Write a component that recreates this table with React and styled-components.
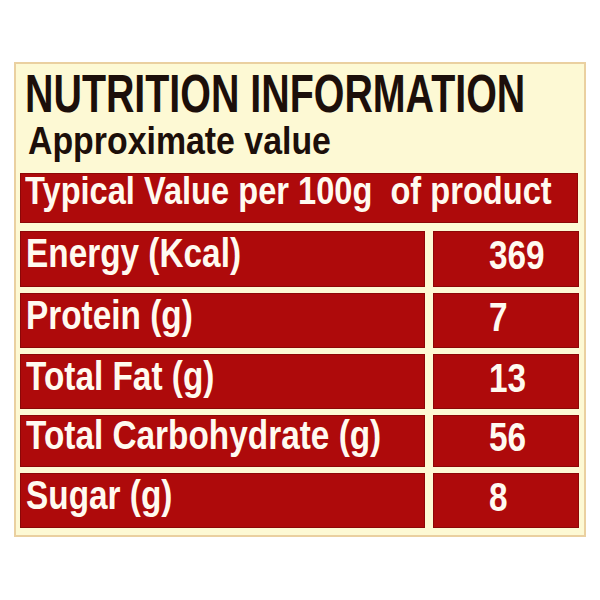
import React, { useLayoutEffect, useRef, useState } from 'react'
import styled, { createGlobalStyle } from 'styled-components'

const GlobalStyle = createGlobalStyle`
  html, body {
    margin: 0;
    padding: 0;
    background: #ffffff;
  }
`

const Page = styled.div`
  width: 600px;
  height: 600px;
  padding: 62px 14px 0 14px;
  box-sizing: border-box;
`

const Panel = styled.section`
  width: 572px;
  box-sizing: border-box;
  background: #fdf9d4;
  border: 2px solid #ead0a0;
  padding: 0 6px 7px 4px;
  display: flex;
  flex-direction: column;
  font-family: "Liberation Sans", Arial, sans-serif;
  font-weight: 700;
`

const Title = styled.h1`
  margin: 0;
  height: 60px;
  padding-left: 5px;
  display: flex;
  align-items: center;
  font-size: 53px;
  line-height: 48px;
  font-weight: 700;
  color: #1c0f0a;
  white-space: nowrap;
`

const Subtitle = styled.h2`
  margin: 0;
  height: 34px;
  padding-left: 8px;
  display: flex;
  align-items: center;
  font-size: 39px;
  line-height: 34px;
  font-weight: 700;
  color: #1c0f0a;
  white-space: nowrap;
`

const StretchBox = styled.span`
  display: inline-block;
  transform: scaleX(${p => p.$sx});
  transform-origin: left center;
`

// scaleX leaves the layout width untouched, so pull the right edge back by the amount squeezed
function Stretch({ sx, children }) {
  const el = useRef(null)
  const [shrink, setShrink] = useState(0)

  useLayoutEffect(() => {
    if (!el.current) return
    setShrink(el.current.offsetWidth * (1 - sx))
  }, [sx, children])

  return (
    <StretchBox ref={el} $sx={sx} style={{ marginRight: -shrink }}>
      {children}
    </StretchBox>
  )
}

const HeaderBar = styled.div`
  margin-top: 15px;
  height: 50px;
  box-sizing: border-box;
  padding: 0 0 14px 5px;
  background: #ae0a0b;
  box-shadow: inset 0 0 0 1px #8c0707;
  display: flex;
  align-items: center;
  font-size: 39px;
  line-height: 36px;
  color: #fffaf0;
  white-space: nowrap;
`

const Rows = styled.div`
  margin-top: 8px;
  display: grid;
  grid-template-columns: 405px 146px;
  column-gap: 8px;
  row-gap: 6px;
`

const Cell = styled.div`
  height: ${p => p.$h}px;
  box-sizing: border-box;
  padding: 0 0 ${p => (p.$value ? 8 : 12)}px ${p => (p.$value ? 56 : 6)}px;
  background: #ae0a0b;
  box-shadow: inset 0 0 0 1px #8c0707;
  display: flex;
  align-items: center;
  font-size: 40px;
  line-height: 40px;
  color: #fffaf0;
  white-space: nowrap;
`

const rows = [
  { label: 'Energy (Kcal)', value: '369', h: 56 },
  { label: 'Protein (g)', value: '7', h: 55 },
  { label: 'Total Fat (g)', value: '13', h: 55 },
  { label: 'Total Carbohydrate (g)', value: '56', h: 52 },
  { label: 'Sugar (g)', value: '8', h: 55 },
]

export default function App() {
  return (
    <>
      <GlobalStyle />
      <Page>
        <Panel>
          <Title>
            <Stretch sx={0.743}>NUTRITION INFORMATION</Stretch>
          </Title>
          <Subtitle>
            <Stretch sx={0.868}>Approximate value</Stretch>
          </Subtitle>
          <HeaderBar>
            <Stretch sx={0.836}>Typical Value per 100g&nbsp; of product</Stretch>
          </HeaderBar>
          <Rows>
            {rows.map(r => (
              <React.Fragment key={r.label}>
                <Cell $h={r.h}>
                  <Stretch sx={0.834}>{r.label}</Stretch>
                </Cell>
                <Cell $h={r.h} $value>
                  <Stretch sx={0.834}>{r.value}</Stretch>
                </Cell>
              </React.Fragment>
            ))}
          </Rows>
        </Panel>
      </Page>
    </>
  )
}
